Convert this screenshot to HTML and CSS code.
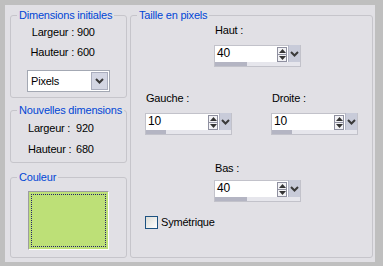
FILE: index.html
```html
<!DOCTYPE html>
<html lang="fr">
<head>
<meta charset="utf-8">
<title>Taille de la bordure</title>
<link rel="stylesheet" href="styles.css">
</head>
<body>
<div class="dialog">
  <div class="col-left">
    <fieldset class="group g1">
      <legend>Dimensions initiales</legend>
      <div class="dims dims-right">
        <span class="lbl">Largeur :</span><span>900</span>
        <span class="lbl">Hauteur :</span><span>600</span>
      </div>
      <div class="select">
        <span class="sel-text">Pixels</span>
        <span class="sel-btn"><svg width="9" height="6" viewBox="0 0 9 6"><path d="M1 1 L4.5 4.5 L8 1" stroke="#3a3a3a" stroke-width="2" fill="none"/></svg></span>
      </div>
    </fieldset>
    <fieldset class="group g2">
      <legend>Nouvelles dimensions</legend>
      <div class="dims dims-left">
        <span class="lbl">Largeur :</span><span>920</span>
        <span class="lbl">Hauteur :</span><span>680</span>
      </div>
    </fieldset>
    <fieldset class="group g3">
      <legend>Couleur</legend>
      <div class="swatch"></div>
    </fieldset>
  </div>
  <fieldset class="group g-right">
    <legend>Taille en pixels</legend>
    <div class="field f-haut">
      <div class="flabel">Haut :</div>
      <div class="spin">
        <span class="val">40</span>
        <span class="arrows">
          <span class="ab"><svg width="7" height="4" viewBox="0 0 7 4"><path d="M3.5 0 L7 4 H0 Z" fill="#333"/></svg></span>
          <span class="ab"><svg width="7" height="4" viewBox="0 0 7 4"><path d="M0 0 H7 L3.5 4 Z" fill="#333"/></svg></span>
        </span>
        <span class="dd"><svg width="9" height="6" viewBox="0 0 9 6"><path d="M1 1 L4.5 4.5 L8 1" stroke="#3a3a3a" stroke-width="2" fill="none"/></svg></span>
        <span class="bar"><span class="fill"></span></span>
      </div>
    </div>
    <div class="pair">
      <div class="field">
        <div class="flabel">Gauche :</div>
        <div class="spin">
          <span class="val">10</span>
          <span class="arrows">
            <span class="ab"><svg width="7" height="4" viewBox="0 0 7 4"><path d="M3.5 0 L7 4 H0 Z" fill="#333"/></svg></span>
            <span class="ab"><svg width="7" height="4" viewBox="0 0 7 4"><path d="M0 0 H7 L3.5 4 Z" fill="#333"/></svg></span>
          </span>
          <span class="dd"><svg width="9" height="6" viewBox="0 0 9 6"><path d="M1 1 L4.5 4.5 L8 1" stroke="#3a3a3a" stroke-width="2" fill="none"/></svg></span>
          <span class="bar"><span class="fill fill-small"></span></span>
        </div>
      </div>
      <div class="field">
        <div class="flabel">Droite :</div>
        <div class="spin">
          <span class="val">10</span>
          <span class="arrows">
            <span class="ab"><svg width="7" height="4" viewBox="0 0 7 4"><path d="M3.5 0 L7 4 H0 Z" fill="#333"/></svg></span>
            <span class="ab"><svg width="7" height="4" viewBox="0 0 7 4"><path d="M0 0 H7 L3.5 4 Z" fill="#333"/></svg></span>
          </span>
          <span class="dd"><svg width="9" height="6" viewBox="0 0 9 6"><path d="M1 1 L4.5 4.5 L8 1" stroke="#3a3a3a" stroke-width="2" fill="none"/></svg></span>
          <span class="bar"><span class="fill fill-small"></span></span>
        </div>
      </div>
    </div>
    <div class="field f-bas">
      <div class="flabel">Bas :</div>
      <div class="spin">
        <span class="val">40</span>
        <span class="arrows">
          <span class="ab"><svg width="7" height="4" viewBox="0 0 7 4"><path d="M3.5 0 L7 4 H0 Z" fill="#333"/></svg></span>
          <span class="ab"><svg width="7" height="4" viewBox="0 0 7 4"><path d="M0 0 H7 L3.5 4 Z" fill="#333"/></svg></span>
        </span>
        <span class="dd"><svg width="9" height="6" viewBox="0 0 9 6"><path d="M1 1 L4.5 4.5 L8 1" stroke="#3a3a3a" stroke-width="2" fill="none"/></svg></span>
        <span class="bar"><span class="fill"></span></span>
      </div>
    </div>
    <label class="check"><span class="box"></span><span>Symétrique</span></label>
  </fieldset>
</div>
</body>
</html>
```

FILE: styles.css
```css
* { box-sizing: border-box; }
html, body { margin: 0; padding: 0; }
body {
  background: #bfbfbf;
  font: 11px/13px "Liberation Sans", Arial, sans-serif;
  letter-spacing: -0.2px;
  color: #000;
  width: 383px;
  height: 266px;
  overflow: hidden;
}
.dialog {
  margin: 5px 8px 4px 5px;
  height: 257px;
  background: #e1e0e5;
  display: flex;
  gap: 3px;
  padding: 4px 2px 4px 5px;
}
.col-left {
  width: 117px;
  display: flex;
  flex-direction: column;
}
.group {
  margin: 0;
  padding: 0;
  min-width: 0;
  border: 1px solid #c6c5cb;
  border-radius: 3px;
}
.group legend {
  margin-left: 6px;
  padding: 0 2px;
  color: #0046d5;
  line-height: 13px;
}
.g1 { height: 89px; }
.g2 { height: 59px; margin-top: 6px; }
.g3 { height: 87px; margin-top: 8px; }
.g-right { flex: 1; }

.dims {
  display: grid;
  column-gap: 3px;
}
.dims-right {
  grid-template-columns: 54px auto;
  row-gap: 7px;
  margin: 4px 0 0 9px;
}
.dims-right .lbl { text-align: right; }
.dims-left {
  grid-template-columns: 45px auto;
  row-gap: 8px;
  margin: 5px 0 0 17px;
}

.select {
  margin: 11px 0 0 16px;
  width: 83px;
  height: 22px;
  border: 1px solid #a3a8b3;
  background: #fff;
  display: flex;
  align-items: flex-start;
  padding: 1px;
}
.sel-text {
  flex: 1;
  padding: 3px 0 0 2px;
}
.sel-btn {
  width: 17px;
  height: 18px;
  background: #d3d6e3;
  border: 1px solid #a9adbd;
  display: flex;
  align-items: center;
  justify-content: center;
}

.swatch {
  position: relative;
  margin: 7px 0 0 17px;
  width: 81px;
  height: 59px;
  border: 1px solid;
  border-color: #9c9ca2 #ffffff #ffffff #9c9ca2;
  background: #bde077;
}
.swatch::after {
  content: "";
  position: absolute;
  inset: 2px;
  border: 1px dotted #23236a;
}

.field { display: flex; flex-direction: column; align-items: flex-start; }
.flabel { padding-left: 1px; }
.f-haut { margin: 2px 0 0 83px; }
.f-haut .spin { margin-top: 8px; }
.pair {
  display: flex;
  justify-content: space-between;
  margin: 25px 14px 0 14px;
}
.pair .spin { margin-top: 8px; }
.f-bas { margin: 27px 0 0 83px; }
.f-bas .spin { margin-top: 5px; }

.spin {
  width: 87px;
  height: 22px;
  border: 1px solid #c2c2ca;
  background: #fff;
  display: grid;
  grid-template-columns: 1fr 11px 12px;
  grid-template-rows: 16px 4px;
  column-gap: 0;
}
.val {
  padding: 1px 0 0 2px;
  font-size: 12px;
  line-height: 13px;
}
.arrows {
  display: flex;
  flex-direction: column;
  padding-top: 1px;
}
.ab {
  width: 10px;
  height: 8px;
  border: 1px solid #8f90a0;
  background: #f2f2f5;
  display: flex;
  align-items: center;
  justify-content: center;
}
.ab + .ab { margin-top: -1px; }
.dd {
  background: #c8cbd9;
  border-left: 1px solid #b3b6c6;
  display: flex;
  align-items: center;
  justify-content: center;
  margin-top: -1px;
  height: 18px;
}
.bar {
  grid-column: 1 / -1;
  background: #e6e6ec;
  display: block;
}
.fill {
  display: block;
  width: 32px;
  height: 100%;
  background: #b4b5c3;
}
.fill-small { width: 20px; }

.check {
  display: flex;
  align-items: center;
  gap: 3px;
  margin: 14px 0 0 14px;
}
.box {
  width: 13px;
  height: 13px;
  border: 1px solid #1d5281;
  background: linear-gradient(135deg, #dcdcd6, #ffffff);
}
```
